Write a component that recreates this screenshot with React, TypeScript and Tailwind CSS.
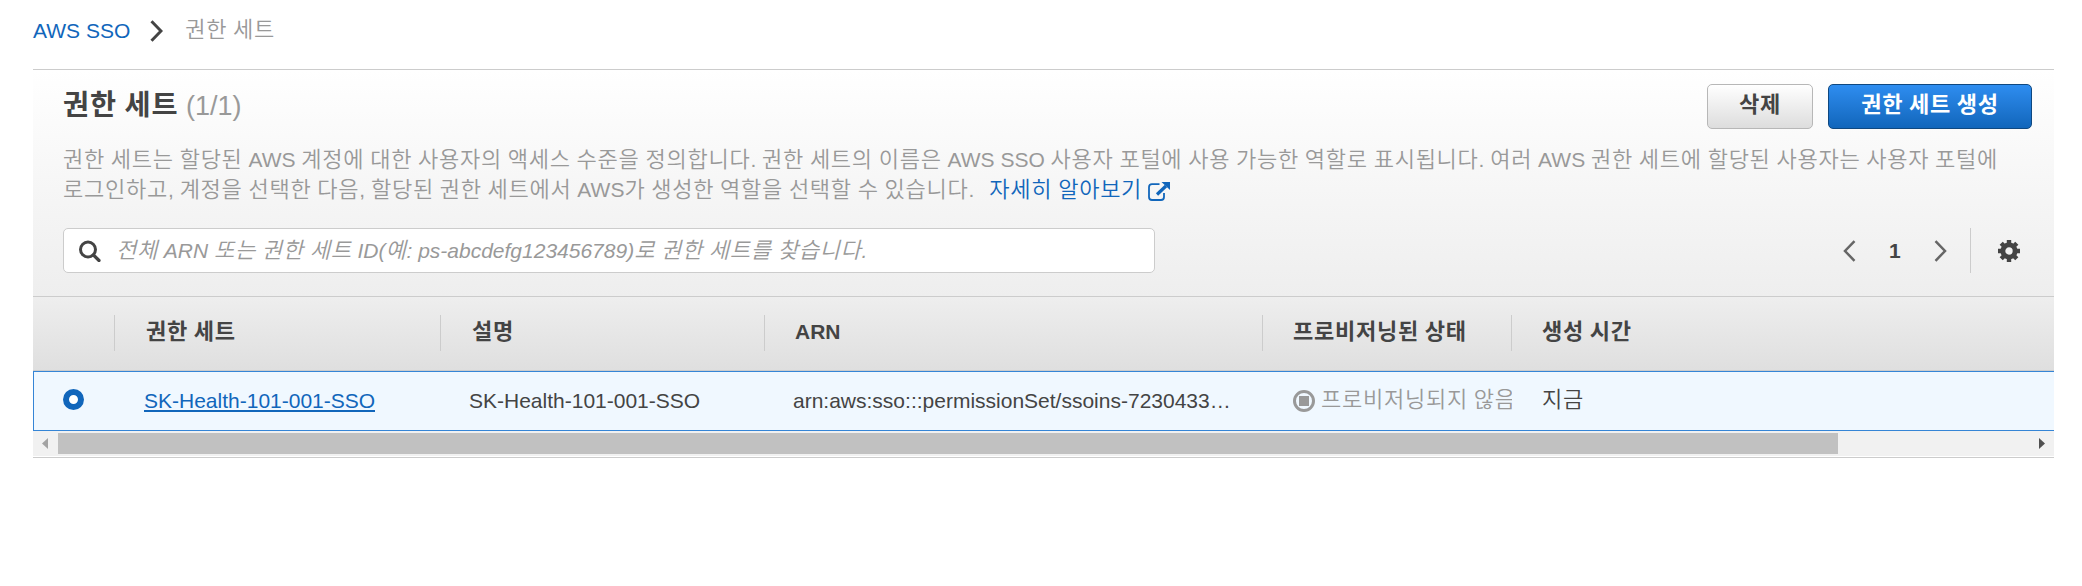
import React from "react";

const FONT = "font-['Liberation_Sans','Noto_Sans_CJK_KR',sans-serif]";

/** Text in which runs of Hangul are set slightly larger than the Latin around them. */
function Ko({ text }: { text: string }) {
  return (
    <>
      {text.split(/([가-힣]+)/).map((run, i) =>
        i % 2 ? <span key={i} className="text-[1.05em] leading-none tracking-[0.032em]">{run}</span> : run
      )}
    </>
  );
}

function Chevron({ flip, bold, className }: { flip?: boolean; bold?: boolean; className?: string }) {
  return (
    <svg viewBox="0 0 13 22" className={className} fill="none" stroke="currentColor">
      <path d={flip ? "M11.5 1.2 L2 11 L11.5 20.8" : "M1.5 1.2 L11 11 L1.5 20.8"} strokeWidth={bold ? 3 : 2.5} />
    </svg>
  );
}

function HeaderCell({ text, width, inset }: { text: string; width: string; inset: string }) {
  return (
    <div className={`${width} ${inset} flex h-9 shrink-0 items-center border-l border-[#ccc] pb-0.5 font-bold`}>
      <span><Ko text={text} /></span>
    </div>
  );
}

export default function App() {
  return (
    <div className={`${FONT} h-[586px] w-[2082px] overflow-hidden bg-white pl-[33px] text-[21px] leading-[30px] text-[#444]`}>
      <nav className="flex h-[69px] items-start pt-[15px]">
        <a className="pt-px text-[#1166bb]">AWS SSO</a>
        <Chevron bold className="mt-[5px] ml-5 h-[22px] w-[13px]" />
        <span className="ml-[22px] font-[350] text-[#999]"><Ko text="권한 세트" /></span>
      </nav>
      <section className="w-[2021px] border-y border-[#ccc]">
        <div className="flex h-[226px] flex-col bg-linear-to-b from-white to-[#eee] pl-[30px]">
          <div className="flex h-[75px] items-start justify-between pt-[14px] pr-[22px]">
            <h1 className="pt-[3px] text-[27px] leading-[38px] font-bold">
              <Ko text="권한 세트 " /><span className="font-light text-[#999]">(1/1)</span>
            </h1>
            <div className="flex gap-[15px] font-bold">
              <button className="h-[45px] w-[106px] rounded-[5px] border border-[#b7b7b7] bg-linear-to-b from-white to-[#ddd] pb-1"><Ko text="삭제" /></button>
              <button className="h-[45px] w-[204px] rounded-[5px] border border-[#0f4880] bg-linear-to-b from-[#2e8df0] to-[#1166bb] pb-1 text-white"><Ko text="권한 세트 생성" /></button>
            </div>
          </div>
          <p className="h-[83px] whitespace-nowrap font-[350] text-[#999]">
            <Ko text="권한 세트는 할당된 AWS 계정에 대한 사용자의 액세스 수준을 정의합니다. 권한 세트의 이름은 AWS SSO 사용자 포털에 사용 가능한 역할로 표시됩니다. 여러 AWS 권한 세트에 할당된 사용자는 사용자 포털에" />
            <br />
            <Ko text="로그인하고, 계정을 선택한 다음, 할당된 권한 세트에서 AWS가 생성한 역할을 선택할 수 있습니다." />
            <a className="ml-[15px] text-[#1166bb]">
              <Ko text="자세히 알아보기" />
              <svg viewBox="0 0 22 19" className="ml-[6px] inline h-[19px] w-[22px] align-[-4px]" fill="none" stroke="currentColor">
                <path d="M11.5 2.2H4Q1 2.2 1 5.2V15Q1 18 4 18H13Q16 18 16 15V11" strokeWidth="1.8" />
                <path d="M9 12.5L18 4" strokeWidth="3.2" />
                <path d="M13.5 0H22V8Z" fill="currentColor" stroke="none" />
              </svg>
            </a>
          </p>
          <div className="flex h-[45px] items-center">
            <div className="flex h-[45px] w-[1092px] items-center rounded-[5px] border border-[#ccc] bg-white pl-[15px]">
              <svg viewBox="0 0 22 22" className="h-[22px] w-[22px]" fill="none" stroke="currentColor">
                <circle cx="9" cy="9.5" r="7.5" strokeWidth="3" />
                <path d="M14.5 15L20 20.5" strokeWidth="3.2" strokeLinecap="round" />
              </svg>
              <span className="ml-[15px] font-[350] text-[#999] italic"><Ko text="전체 ARN 또는 권한 세트 ID(예: ps-abcdefg123456789)로 권한 세트를 찾습니다." /></span>
            </div>
            <Chevron flip className="ml-[688px] h-[22px] w-[13px] text-[#666]" />
            <span className="ml-[33px] font-bold">1</span>
            <Chevron className="ml-[33px] h-[22px] w-[13px] text-[#666]" />
            <span className="ml-[23px] h-[45px] w-px bg-[#ccc]" />
            <svg viewBox="0 0 22 22" className="ml-[27px] h-[22px] w-[22px]" fill="none" stroke="currentColor">
              <circle cx="11" cy="11" r="6.1" strokeWidth="4.8" />
              <path d="M11 0V4M11 18V22M0 11H4M18 11H22M3.2 3.2L6 6M16 16L18.8 18.8M3.2 18.8L6 16M16 6L18.8 3.2" strokeWidth="4.4" />
            </svg>
          </div>
        </div>
        <div className="flex h-[75px] items-start border-y border-[#ccc] bg-linear-to-b from-[#eee] to-[#dfdfdf] pt-[18px]">
          <div className="w-[81px] shrink-0" />
          <HeaderCell width="w-[326px]" inset="pl-[31px]" text="권한 세트" />
          <HeaderCell width="w-[324px]" inset="pl-[31px]" text="설명" />
          <HeaderCell width="w-[498px]" inset="pl-[30px]" text="ARN" />
          <HeaderCell width="w-[249px]" inset="pl-[30px]" text="프로비저닝된 상태" />
          <HeaderCell width="w-[500px]" inset="pl-[30px]" text="생성 시간" />
        </div>
        <div className="flex h-[60px] items-center border border-r-0 border-[#3585d6] bg-[#f0f8ff]">
          <span className="mb-[3px] ml-[29px] h-[21px] w-[21px] rounded-full border-[6.5px] border-[#1166bb] bg-white" />
          <span className="ml-[60px] w-[325px] shrink-0">
            <a className="inline-block h-[26px] border-b-2 border-[#1166bb] text-[#1166bb]">SK-Health-101-001-SSO</a>
          </span>
          <span className="w-[324px] shrink-0">SK-Health-101-001-SSO</span>
          <span className="w-[500px] shrink-0">arn:aws:sso:::permissionSet/ssoins-7230433…</span>
          <span className="flex w-[219px] shrink-0 items-center overflow-hidden font-[350] whitespace-nowrap text-[#999]">
            <svg viewBox="0 0 22 22" className="mr-[6px] h-[22px] w-[22px] shrink-0">
              <circle cx="11" cy="11" r="9.5" fill="none" stroke="#999" strokeWidth="3" />
              <rect x="6" y="6" width="10" height="10" fill="#999" />
            </svg>
            <span className="pb-0.5"><Ko text="프로비저닝되지 않음" /></span>
          </span>
          <span className="ml-[30px] pb-0.5 font-[350]"><Ko text="지금" /></span>
        </div>
        <div className="mb-px flex h-[25px] items-center bg-[#f1f1f1]">
          <svg viewBox="0 0 6 11" className="ml-[9px] h-[11px] w-[6px]"><path d="M6 0V11L0 5.5Z" fill="#a3a3a3" /></svg>
          <span className="ml-[10px] h-[21px] w-[1780px] bg-[#c1c1c1]" />
          <svg viewBox="0 0 6 11" className="ml-[201px] h-[11px] w-[6px]"><path d="M0 0V11L6 5.5Z" fill="#505050" /></svg>
        </div>
      </section>
    </div>
  );
}
